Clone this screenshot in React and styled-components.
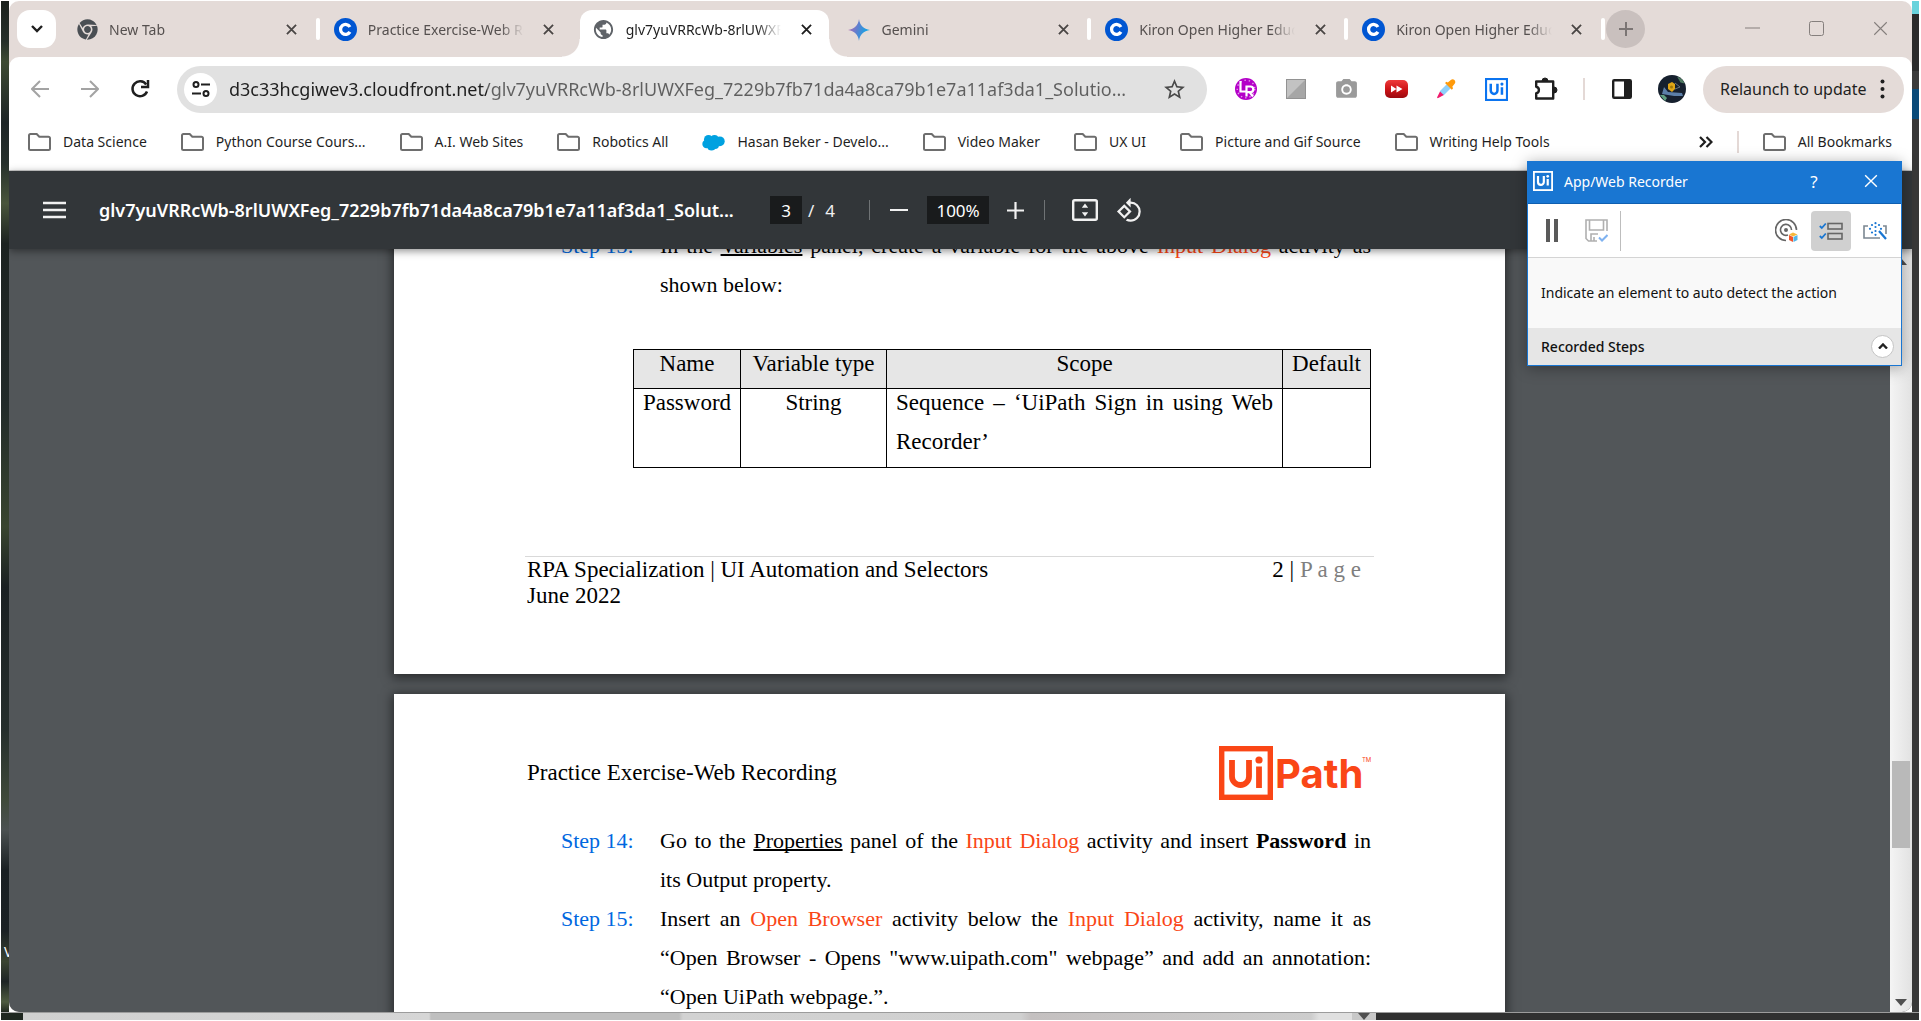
import React from "react";
import styled, { createGlobalStyle, css } from "styled-components";
import { FaChrome } from "react-icons/fa";
import { MdPublic, MdPhotoCamera, MdStarBorder, MdRotate90DegreesCcw } from "react-icons/md";

const ui = `"Noto Sans", "Open Sans", sans-serif`;
const serif = `"Liberation Serif", "Times New Roman", serif`;

const Global = createGlobalStyle`
  *, *::before, *::after { box-sizing: border-box; }
  html, body { margin: 0; height: 100%; background: #fff; }
  body { overflow: hidden; font-family: ${ui}; font-size: 14px; color: #1f1f1f; }
  button, input { font: inherit; color: inherit; border: 0; padding: 0; margin: 0; background: none; }
  svg { display: block; flex: none; }
  p, h1, h2 { margin: 0; font-weight: 400; font-size: inherit; }
`;

/* ---------- desktop ---------- */
const Desktop = styled.div`
  display: grid;
  grid-template-columns: 8px minmax(0, 1fr) 7px;
  grid-template-rows: minmax(0, 1fr) 8px;
  height: 100vh;
  padding: 1px 2px 1px 1px;
`;
const LeftEdge = styled.div`
  display: flex;
  align-items: flex-end;
  overflow: hidden;
  padding: 0 0 50px 3px;
  color: #fff;
  font-size: 14px;
  line-height: 20px;
  background: linear-gradient(180deg, #1b211d 0, #26302a 4%, #3d4a33 6%, #1d2526 12%, #26302c 16%, #49553c 20%, #1c2220 24%,
    #222b2a 40%, #39452f 52%, #1a2022 58%, #252e2c 72%, #3f4a3a 79%, #4b5151 82%, #191f22 86%, #1b2124 92%, #3a4431 95%, #1d2425 97%, #4e5b40 99%, #20281f 100%);
`;
const RightEdge = styled.div`
  background: linear-gradient(180deg, #69d3dc 0 13px, #2b2b2b 13px 70px, #3a3a3a 70px 88px, #0a4a78 88px 118px, #383838 118px);
`;
const BottomEdge = styled.div`
  grid-column: 1 / -1;
  display: flex;
  justify-content: flex-end;
  padding-left: 22px;
  background: linear-gradient(90deg, #1f2720 22px, #d0d0d0 22px, #d6d6d6 428px, #bfbfbf 430px, #bfbfbf 678px, #d2d2d2 682px, #d0d0d0 1020px, #c4c0c0 1030px, #cdcdcd 1310px, #e0e0e0 1318px);
  border-top: 1px solid #9c9c9c;
`;
const BottomArrow = styled.div`
  display: flex;
  justify-content: center;
  width: 24px;
  background: #c8c8c8;
`;
const BottomDark = styled.div`
  width: 543px;
  background: #303030;
`;

/* ---------- browser window ---------- */
const Window = styled.main`
  display: flex;
  flex-direction: column;
  min-width: 0;
  background: #e4dbd8;
  border-radius: 10px;
  overflow: hidden;
`;
const TabStrip = styled.header`
  display: flex;
  align-items: flex-start;
  height: 56px;
  padding: 9px 0 0 8px;
`;
const TabSearch = styled.button`
  display: grid;
  place-items: center;
  flex: none;
  width: 39px;
  height: 38px;
  margin-right: 5px;
  border-radius: 13px;
  background: #fff;
`;
const TabList = styled.nav`
  display: flex;
  flex: 0 1 1542px;
  min-width: 0;
`;
const Tab = styled.div`
  position: relative;
  display: flex;
  align-items: center;
  flex: 1 1 0;
  min-width: 0;
  height: 39px;
  padding: 0 16px;
  gap: 11px;
  color: #55504f;
  ${(p) =>
    p.$bar &&
    css`
      &::after {
        content: "";
        position: absolute;
        right: -2px;
        top: 8px;
        width: 4px;
        height: 22px;
        border-radius: 2px;
        background: #fff;
      }
    `}
  ${(p) =>
    p.$active &&
    css`
      height: 47px;
      margin: 0 3px 0 5px;
      padding: 0 13px 8px 12px;
      border-radius: 12px 12px 0 0;
      background: #fff;
      color: #1f1f1f;
      &::before,
      &::after {
        content: "";
        position: absolute;
        bottom: 0;
        width: 18px;
        height: 18px;
      }
      &::before {
        left: -18px;
        background: radial-gradient(circle at 0 0, transparent 17px, #fff 18px);
      }
      &::after {
        right: -18px;
        background: radial-gradient(circle at 100% 0, transparent 17px, #fff 18px);
      }
    `}
`;
const TabTitle = styled.span`
  flex: 1;
  min-width: 0;
  overflow: hidden;
  white-space: nowrap;
  line-height: 22px;
  mask-image: linear-gradient(90deg, #000 calc(100% - 28px), transparent calc(100% - 4px));
`;
const TabClose = styled.button`
  display: grid;
  place-items: center;
  width: 20px;
  height: 20px;
  color: ${(p) => (p.$active ? "#1f1f1f" : "#4a4645")};
`;
const NewTab = styled.button`
  display: grid;
  place-items: center;
  flex: none;
  width: 39px;
  height: 38px;
  margin-left: 3px;
  border-radius: 50%;
  background: #c9c0be;
  color: #7b7574;
`;
const WindowControls = styled.div`
  display: flex;
  margin-left: auto;
  color: #857f7d;
`;
const WindowButton = styled.button`
  display: grid;
  place-items: center;
  width: 64px;
  height: 36px;
`;
const Chrome = styled.section`
  background: #fff;
  border-radius: 10px 10px 0 0;
  border-bottom: 1px solid #cfcfcf;
`;
const AddressRow = styled.div`
  display: flex;
  align-items: center;
  height: 64px;
  padding: 0 8px 0 6px;
`;
const ToolButton = styled.button`
  display: grid;
  place-items: center;
  flex: none;
  width: 50px;
  height: 40px;
  color: ${(p) => (p.$muted ? "#a3a3a3" : "#1f1f1f")};
`;
const Omnibox = styled.label`
  display: flex;
  align-items: center;
  flex: 1;
  min-width: 0;
  height: 47px;
  margin: 0 14px 0 12px;
  padding: 0 20px 0 7px;
  border-radius: 24px;
  background: #e1e1e1;
`;
const SiteInfo = styled.span`
  display: grid;
  place-items: center;
  width: 33px;
  height: 33px;
  margin-right: 12px;
  border-radius: 50%;
  background: #fff;
`;
const UrlInput = styled.input`
  flex: 1;
  min-width: 0;
  height: 32px;
  font-size: 18px;
  text-overflow: ellipsis;
  color: transparent;
  background: linear-gradient(90deg, #1f1f1f 258px, #5f5f5f 258px);
  background-clip: text;
  outline: 0;
`;
const ThinBar = styled.span`
  flex: none;
  width: 2px;
  height: 22px;
  margin: 0 ${(p) => p.$m || 0}px;
  background: #e4d9d6;
`;
const Relaunch = styled.button`
  display: flex;
  align-items: center;
  justify-content: space-between;
  flex: none;
  width: 201px;
  height: 47px;
  margin-left: 6px;
  padding: 0 19px 0 17px;
  border-radius: 24px;
  background: #e4dbd8;
  font-size: 16px;
  white-space: nowrap;
`;
const BookmarkRow = styled.nav`
  display: flex;
  align-items: center;
  height: 49px;
  padding: 0 20px 7px 19px;
  gap: 34px;
`;
const Bookmark = styled.a`
  display: flex;
  align-items: center;
  gap: 12px;
  color: #1f1f1f;
  text-decoration: none;
  white-space: nowrap;
  line-height: 22px;
`;
const BookmarkEnd = styled.div`
  display: flex;
  align-items: center;
  gap: 24px;
  margin-left: auto;
`;

/* ---------- pdf viewer ---------- */
const PdfBar = styled.div`
  position: relative;
  z-index: 2;
  display: flex;
  align-items: center;
  flex: none;
  height: 78px;
  padding: 0 23px;
  background: #323639;
  color: #f1f1f1;
  box-shadow: 0 2px 8px rgba(0, 0, 0, 0.45);
`;
const PdfButton = styled.button`
  display: grid;
  place-items: center;
  flex: none;
  width: 45px;
  height: 40px;
`;
const PdfTitle = styled.h1`
  flex: none;
  width: 671px;
  margin-left: 22px;
  overflow: hidden;
  white-space: nowrap;
  font-size: 18px;
  font-weight: 600;
  line-height: 26px;
  color: #fff;
`;
const PdfInput = styled.input`
  flex: none;
  width: ${(p) => p.$w}px;
  height: 28px;
  margin: ${(p) => p.$m || 0};
  background: #191b1c;
  font-size: 17px;
  text-align: center;
  color: #fff;
`;
const PageCount = styled.span`
  display: flex;
  gap: 11px;
  margin-left: 6px;
  font-size: 17px;
`;
const PdfDivider = styled.span`
  flex: none;
  width: 1px;
  height: 20px;
  margin: ${(p) => p.$m};
  background: #6f7375;
`;
const Viewer = styled.section`
  display: flex;
  flex: 1;
  min-height: 0;
  background: #525659;
`;
const PageStack = styled.div`
  display: flex;
  flex-direction: column;
  align-items: center;
  flex: 1;
  min-width: 0;
  gap: 20px;
  margin-top: -23px;
`;
const Page = styled.article`
  flex: none;
  width: 100%;
  max-width: 1111px;
  padding: ${(p) => p.$pad};
  background: #fff;
  box-shadow: 0 2px 10px 2px rgba(0, 0, 0, 0.5);
  color: #000;
  font-family: ${serif};
  font-size: 23px;
`;
const Step = styled.div`
  display: grid;
  grid-template-columns: 99px minmax(0, 1fr);
  padding-left: 34px;
  font-size: 22px;
  line-height: 39px;
`;
const StepLabel = styled.h2`
  color: #0067df;
`;
const StepText = styled.p`
  text-align: justify;
`;
const Term = styled.span`
  color: #fa4616;
`;
const Underlined = styled.u`
  text-decoration-thickness: 2px;
  text-decoration-skip-ink: none;
`;
const VarTable = styled.table`
  width: calc(100% - 106px);
  margin: 45px 0 88px 106px;
  border-collapse: collapse;
  table-layout: fixed;
  line-height: 39px;
  th,
  td {
    padding: 0 9px;
    border: 1px solid #000;
    font-weight: 400;
    text-align: center;
    vertical-align: top;
    white-space: nowrap;
  }
  th {
    background: #e6e6e6;
  }
  th p {
    margin: -6px -9px 5px;
  }
  td p {
    margin: -6px 0 6px;
  }
  td:nth-child(1) p {
    margin: -6px -9px 6px;
  }
  td:nth-child(3) {
    text-align: justify;
    white-space: normal;
  }
`;
const PageFooter = styled.footer`
  display: flex;
  justify-content: space-between;
  margin: 0 -3px 0 -2px;
  padding: 0 13px 0 2px;
  border-top: 1px solid #d9d9d9;
  line-height: 26px;
`;
const PageNumber = styled.p`
  span {
    color: #7f7f7f;
  }
`;
const PageHeader = styled.header`
  display: flex;
  align-items: center;
  justify-content: space-between;
  margin-bottom: 21px;
`;
const Scrollbar = styled.div`
  display: flex;
  flex-direction: column;
  align-items: center;
  justify-content: space-between;
  flex: none;
  width: 22px;
  padding: 9px 0 6px;
  background: linear-gradient(90deg, #f4f4f4, #e2e2e2);
`;
const Thumb = styled.div`
  width: 18px;
  height: 87px;
  margin-top: 344px;
  background: #b9b9b9;
`;

/* ---------- recorder ---------- */
const Recorder = styled.aside`
  position: absolute;
  top: 161px;
  right: 19px;
  z-index: 5;
  width: 375px;
  border: 1px solid #1976d2;
  background: #fff;
  box-shadow: 0 2px 14px rgba(0, 0, 0, 0.35);
  color: #111;
`;
const RecTitle = styled.header`
  display: flex;
  align-items: center;
  height: 42px;
  padding: 0 20px 3px 5px;
  background: #1976d2;
  border-bottom: 1px solid #0f5fb0;
  color: #fff;
  h2 {
    flex: 1;
    margin-left: 11px;
  }
`;
const RecTitleButton = styled.button`
  display: grid;
  place-items: center;
  width: 20px;
  height: 24px;
  margin-left: ${(p) => p.$gap || 0}px;
  font-size: 17px;
`;
const RecTools = styled.div`
  display: flex;
  align-items: center;
  height: 54px;
  padding: 0 2px 0 4px;
  border-bottom: 1px solid #d4d4d4;
`;
const RecTool = styled.button`
  display: grid;
  place-items: center;
  width: 40px;
  height: 40px;
  margin-right: 4px;
  border-radius: 4px;
  background: ${(p) => (p.$on ? "#d0d0d0" : "transparent")};
`;
const RecDivider = styled.span`
  width: 1px;
  height: 40px;
  margin-right: auto;
  background: #bdbdbd;
`;
const RecHint = styled.p`
  padding: 24px 13px;
  background: #f9f9f9;
  line-height: 22px;
`;
const RecFooter = styled.footer`
  display: flex;
  align-items: center;
  justify-content: space-between;
  height: 37px;
  padding: 0 7px 1px 13px;
  background: #e6e6e6;
  font-weight: 500;
`;
const Round = styled.button`
  display: grid;
  place-items: center;
  width: 23px;
  height: 23px;
  border: 1px solid #c4c4c4;
  border-radius: 50%;
  background: #fff;
`;

/* ---------- drawings ---------- */
const Cross = ({ s = 11, w = 2 }) => (
  <svg width={s} height={s} viewBox="0 0 12 12" stroke="currentColor" strokeWidth={w} fill="none">
    <path d="M1 1l10 10M11 1L1 11" />
  </svg>
);
const Coursera = () => (
  <svg width="23" height="23" viewBox="0 0 24 24">
    <circle cx="12" cy="12" r="12" fill="#0056d2" />
    <path d="M16.6 14.5A5.2 5.2 0 1 1 16.6 9.4" fill="none" stroke="#fff" strokeWidth="3.4" />
  </svg>
);
const Gemini = () => (
  <svg width="22" height="22" viewBox="0 0 24 24">
    <defs>
      <linearGradient id="gem" x1="0" y1="0" x2="1" y2="0.3">
        <stop offset="0.1" stopColor="#b56ab0" />
        <stop offset="0.5" stopColor="#5f7fcf" />
        <stop offset="0.9" stopColor="#1ba1e3" />
      </linearGradient>
    </defs>
    <path d="M12 0c.8 6.6 5 11.2 12 12-7 .8-11.2 5.4-12 12-.8-6.6-5-11.2-12-12C7 11.2 11.2 6.6 12 0z" fill="url(#gem)" />
  </svg>
);
const Folder = () => (
  <svg width="23" height="18" viewBox="0 0 23 18" fill="none" stroke="#6e6e6e" strokeWidth="2">
    <path d="M2.5 1h6.2l2.6 2.8h9.2A1.5 1.5 0 0 1 22 5.3v10.2a1.5 1.5 0 0 1-1.5 1.5h-18A1.5 1.5 0 0 1 1 15.5v-13A1.5 1.5 0 0 1 2.5 1z" />
  </svg>
);
const Cloud = () => (
  <svg width="23" height="17" viewBox="0 0 23 17" fill="#00a1e0">
    <circle cx="6.5" cy="5.5" r="4.5" />
    <circle cx="12.5" cy="5" r="4" />
    <circle cx="17.8" cy="7.3" r="4.9" />
    <circle cx="4.5" cy="10" r="4.2" />
    <circle cx="9.5" cy="12" r="4.6" />
    <circle cx="13" cy="11" r="4" />
  </svg>
);
const Arrow = ({ flip }) => (
  <svg width="18" height="18" viewBox="0 0 18 18" fill="none" stroke="currentColor" strokeWidth="2">
    <path d={flip ? "M0 9h16M9 1l8 8-8 8" : "M18 9H2M9 1L1 9l8 8"} />
  </svg>
);
const Reload = () => (
  <svg width="20" height="20" viewBox="0 0 20 20" fill="none" stroke="currentColor" strokeWidth="2.5">
    <path d="M17 12.5A7.5 7.5 0 1 1 16.2 5.5" />
    <path d="M18 1v7h-7" />
  </svg>
);
const Tune = () => (
  <svg width="18" height="18" viewBox="0 0 18 18" fill="none" stroke="#1f1f1f" strokeWidth="2">
    <circle cx="4" cy="4.5" r="2.5" />
    <path d="M9 4.5h9M0 13.5h9" />
    <circle cx="14" cy="13.5" r="2.5" />
  </svg>
);
const LrIcon = () => (
  <svg width="22" height="22" viewBox="0 0 22 22">
    <circle cx="11" cy="11" r="11" fill="#b400c8" />
    <circle cx="11" cy="11" r="8.8" fill="none" stroke="#e29bea" strokeWidth="1.4" strokeDasharray="1.4 3" />
    <path d="M5.5 3v10.5h6M11.5 18.5V8.5h4a2.8 2.8 0 0 1 0 5.6h-4M14.5 14l3.5 4.5" fill="none" stroke="#fff" strokeWidth="2.2" />
  </svg>
);
const Shade = () => (
  <svg width="20" height="20" viewBox="0 0 20 20">
    <rect width="20" height="20" fill="#929292" />
    <path d="M1 1h18v18H1z" fill="#a6a6a6" />
    <path d="M1 19V1h18z" fill="#c2c2c2" />
  </svg>
);
const Forward = () => (
  <svg width="23" height="18" viewBox="0 0 23 18">
    <defs>
      <linearGradient id="fwd" x1="0" y1="0" x2="0" y2="1">
        <stop offset="0" stopColor="#ee3b3b" />
        <stop offset="0.5" stopColor="#cf1518" />
        <stop offset="1" stopColor="#9c0a10" />
      </linearGradient>
    </defs>
    <rect width="23" height="18" rx="5" fill="url(#fwd)" />
    <path d="M6 5.5l5.5 3.5L6 12.5zM11.5 5.5L17.5 9l-6 3.5z" fill="#fff" />
  </svg>
);
const Picker = () => (
  <svg width="20" height="20" viewBox="0 0 20 20">
    <path d="M4 12l7-7 4 4-7 7-4 1z" fill="#8fd0fb" />
    <path d="M4 12.5L1 18.5l.8.8 6-3.3z" fill="#f01a6c" />
    <path d="M9 4l1.5-1.2 1.3.8L14.8 1c2.5-2 5.8 1 4 3.5l-2.5 3.2.8 1.5-1.3 1.5z" fill="#ff9a0a" />
  </svg>
);
const UiSquare = ({ s, color }) => (
  <svg width={s} height={s} viewBox="0 0 22 22">
    <rect x="1" y="1" width="20" height="20" fill="none" stroke={color} strokeWidth="2" />
    <path d="M5.5 5.5v6.5a3.2 3.2 0 0 0 6.4 0V5.5M16.2 8.8v7.2" fill="none" stroke={color} strokeWidth="2.4" />
    <circle cx="16.2" cy="5.8" r="1.5" fill={color} />
  </svg>
);
const Puzzle = () => (
  <svg width="24" height="24" viewBox="0 0 24 24" fill="none" stroke="#1f1f1f" strokeWidth="2.4" strokeLinejoin="round">
    <path d="M2.2 4.5h17v17h-17v-5.2c3.6-.6 3.6-6 0-6.6z" />
    <path d="M8 4a3 3 0 0 1 6 0zM20 10a3 3 0 0 1 0 6z" fill="#1f1f1f" strokeWidth="1" />
  </svg>
);
const SidePanel = () => (
  <svg width="20" height="20" viewBox="0 0 20 20">
    <rect x="1.2" y="1.2" width="17.6" height="17.6" rx="1" fill="none" stroke="#1f1f1f" strokeWidth="2.4" />
    <rect x="12" y="1" width="7" height="18" fill="#1f1f1f" />
  </svg>
);
const Avatar = () => (
  <svg width="28" height="28" viewBox="0 0 28 28">
    <circle cx="14" cy="14" r="14" fill="#16202e" />
    <path d="M19 1.500q6 2 7.500 7l-4-1z" fill="#4f7a62" />
    <path d="M2 20l4 0 3 3-2 3z" fill="#5fa080" />
    <path d="M6 12l4 5 14 1 1 3-9 0-12-2z" fill="#5c7fa8" />
    <path d="M17 8l5 4-5 2" fill="none" stroke="#6b7480" strokeWidth="1" />
    <path d="M10 9l4-2 3 2v5l-3 3-4-3z" fill="#e0a516" />
    <circle cx="13.5" cy="12" r="1.5" fill="#a07808" />
  </svg>
);
const Dots = () => (
  <svg width="5" height="20" viewBox="0 0 5 20" fill="#1f1f1f">
    <circle cx="2.5" cy="2.5" r="2" />
    <circle cx="2.5" cy="10" r="2" />
    <circle cx="2.5" cy="17.5" r="2" />
  </svg>
);
const FitPage = () => (
  <svg width="26" height="22" viewBox="0 0 26 22">
    <rect x="1.2" y="1.2" width="23.6" height="19.6" rx="1.5" fill="none" stroke="#f1f1f1" strokeWidth="2.4" />
    <path d="M13 4.5l3.2 4.2H9.8zM13 17.5l3.2-4.2H9.8z" fill="#f1f1f1" />
  </svg>
);
const Triangle = ({ up }) => (
  <svg width="12" height="7" viewBox="0 0 12 7" fill="#505050">
    <path d={up ? "M6 0l6 7H0z" : "M0 0h12L6 7z"} />
  </svg>
);
const UiPathLogo = () => (
  <svg width="153" height="54" viewBox="0 0 153 54" role="img" aria-label="UiPath">
    <rect x="3.7" y="2.7" width="48.6" height="48.6" fill="none" stroke="#fa4616" strokeWidth="5.4" />
    <path d="M14 14v16.5a8.500 8.500 0 0 0 17 0V14M41 20.500V42" fill="none" stroke="#fa4616" strokeWidth="5.800" />
    <circle cx="41" cy="14" r="3.600" fill="#fa4616" />
    <text x="57" y="42" fontFamily="Inter, sans-serif" fontWeight="700" fontSize="40" fill="#fa4616">Path</text>
    <text x="144" y="16" fontFamily="Inter, sans-serif" fontSize="6" fill="#fa4616">TM</text>
  </svg>
);
const Floppy = () => (
  <svg width="23" height="23" viewBox="0 0 23 23" fill="none" stroke="#b0b0b0" strokeWidth="1.6">
    <path d="M12 22H3.500L1 19.500V1h21v11M4.500 1v10h14V1M6 22v-7h7M9 22v-4" />
    <path d="M14 18.500l3 3 5.500-5.500" stroke="#7fb2f0" strokeWidth="2" />
  </svg>
);
const Target = () => (
  <svg width="24" height="24" viewBox="0 0 24 24" fill="none" stroke="#666" strokeWidth="1.6">
    <circle cx="11" cy="11" r="1.2" fill="#666" />
    <path d="M13 16A5.500 5.500 0 1 1 16.500 11M11 21.500A10.500 10.500 0 1 1 21.500 11" />
    <path d="M14 15.500l4-2 4.500 2-4.500 2z" fill="#f6b83c" stroke="none" />
    <path d="M14 16l4 2v5l-4-2z" fill="#f2552c" stroke="none" />
    <path d="M22.500 16l-4 2v5l4-2z" fill="#52b6ea" stroke="none" />
  </svg>
);
const Checklist = () => (
  <svg width="24" height="18" viewBox="0 0 24 18" fill="none">
    <rect x="9" y="1.5" width="14" height="5.5" stroke="#666" strokeWidth="1.6" />
    <rect x="9" y="11.5" width="14" height="5.5" stroke="#666" strokeWidth="1.6" />
    <path d="M.8 4l2 2 4-4.500M.8 14l2 2 4-4.500" stroke="#1976d2" strokeWidth="1.8" />
  </svg>
);
const Wand = () => (
  <svg width="24" height="18" viewBox="0 0 24 18" fill="none">
    <path d="M5 4H1v12h16M20 4h3v8" stroke="#7b8791" strokeWidth="1.6" />
    <path d="M16 9l7 8" stroke="#1976d2" strokeWidth="2.2" />
    <g fill="#1976d2">
      <circle cx="12.5" cy="1.2" r="1.1" /><circle cx="12.5" cy="5" r="1.1" />
      <circle cx="12.5" cy="9" r="1.1" /><circle cx="12.5" cy="12.8" r="1.1" />
      <circle cx="7" cy="6.8" r="1.1" /><circle cx="18" cy="6.8" r="1.1" />
      <circle cx="9" cy="3" r="1.1" /><circle cx="16" cy="3" r="1.1" />
      <circle cx="9" cy="10.5" r="1.1" />
    </g>
  </svg>
);

const tabs = [
  { title: "New Tab", icon: <FaChrome size={21} color="#4a4f54" />, bar: true },
  { title: "Practice Exercise-Web Recording", icon: <Coursera /> },
  { title: "glv7yuVRRcWb-8rlUWXFeg_7229b7", icon: <MdPublic size={23} color="#5f6368" />, active: true },
  { title: "Gemini", icon: <Gemini />, bar: true },
  { title: "Kiron Open Higher Education", icon: <Coursera />, bar: true },
  { title: "Kiron Open Higher Education", icon: <Coursera />, bar: true },
];
const bookmarks = [
  "Data Science",
  "Python Course Cours...",
  "A.I. Web Sites",
  "Robotics All",
  "Hasan Beker - Develo...",
  "Video Maker",
  "UX UI",
  "Picture and Gif Source",
  "Writing Help Tools",
];
const extensions = [
  ["LR", <LrIcon />],
  ["Shade", <Shade />],
  ["Screenshot", <MdPhotoCamera size={25} color="#9a9a9a" />],
  ["Video speed", <Forward />],
  ["Color picker", <Picker />],
  ["UiPath", <UiSquare s={23} color="#0b74f0" />],
  ["Extensions", <Puzzle />],
];

export default function App() {
  return (
    <>
      <Global />
      <Desktop>
        <LeftEdge>V</LeftEdge>
        <Window>
          <TabStrip>
            <TabSearch aria-label="Search tabs">
              <svg width="12" height="8" viewBox="0 0 12 8" fill="none" stroke="#1f1f1f" strokeWidth="2.4">
                <path d="M1 1l5 5 5-5" />
              </svg>
            </TabSearch>
            <TabList>
              {tabs.map((t, i) => (
                <Tab key={i} $active={t.active} $bar={t.bar}>
                  {t.icon}
                  <TabTitle>{t.title}</TabTitle>
                  <TabClose $active={t.active} aria-label="Close tab">
                    <Cross />
                  </TabClose>
                </Tab>
              ))}
            </TabList>
            <NewTab aria-label="New tab">
              <svg width="14" height="14" viewBox="0 0 14 14" stroke="currentColor" strokeWidth="2">
                <path d="M7 0v14M0 7h14" />
              </svg>
            </NewTab>
            <WindowControls>
              <WindowButton aria-label="Minimize">
                <svg width="15" height="2" viewBox="0 0 15 2"><path d="M0 1h15" stroke="currentColor" /></svg>
              </WindowButton>
              <WindowButton aria-label="Maximize">
                <svg width="15" height="15" viewBox="0 0 15 15"><rect x=".5" y=".5" width="14" height="14" rx="2" fill="none" stroke="currentColor" /></svg>
              </WindowButton>
              <WindowButton aria-label="Close">
                <Cross s={15} w={0.9} />
              </WindowButton>
            </WindowControls>
          </TabStrip>

          <Chrome>
            <AddressRow>
              <ToolButton $muted aria-label="Back"><Arrow /></ToolButton>
              <ToolButton $muted aria-label="Forward"><Arrow flip /></ToolButton>
              <ToolButton aria-label="Reload"><Reload /></ToolButton>
              <Omnibox>
                <SiteInfo><Tune /></SiteInfo>
                <UrlInput
                  aria-label="Address"
                  defaultValue="d3c33hcgiwev3.cloudfront.net/glv7yuVRRcWb-8rlUWXFeg_7229b7fb71da4a8ca79b1e7a11af3da1_Solutio..."
                />
                <MdStarBorder size={25} color="#4a4a4a" />
              </Omnibox>
              {extensions.map(([name, icon]) => (
                <ToolButton key={name} aria-label={name}>{icon}</ToolButton>
              ))}
              <ThinBar $m={12} />
              <ToolButton aria-label="Side panel"><SidePanel /></ToolButton>
              <ToolButton aria-label="Profile"><Avatar /></ToolButton>
              <Relaunch>
                Relaunch to update
                <Dots />
              </Relaunch>
            </AddressRow>
            <BookmarkRow>
              {bookmarks.map((b) => (
                <Bookmark key={b} href="#">
                  {b.startsWith("Hasan") ? <Cloud /> : <Folder />}
                  {b}
                </Bookmark>
              ))}
              <BookmarkEnd>
                <svg width="14" height="12" viewBox="0 0 14 12" fill="none" stroke="#1f1f1f" strokeWidth="2.2">
                  <path d="M1 1l5 5-5 5M7.500 1l5 5-5 5" />
                </svg>
                <ThinBar />
                <Bookmark href="#">
                  <Folder />
                  All Bookmarks
                </Bookmark>
              </BookmarkEnd>
            </BookmarkRow>
          </Chrome>

          <PdfBar>
            <PdfButton aria-label="Menu">
              <svg width="23" height="18" viewBox="0 0 23 18" stroke="#f1f1f1" strokeWidth="2.5">
                <path d="M0 2h23M0 9h23M0 16h23" />
              </svg>
            </PdfButton>
            <PdfTitle>glv7yuVRRcWb-8rlUWXFeg_7229b7fb71da4a8ca79b1e7a11af3da1_Solut...</PdfTitle>
            <PdfInput $w={32} aria-label="Page number" defaultValue="3" />
            <PageCount><span>/</span><span>4</span></PageCount>
            <PdfDivider $m="0 6px 0 34px" />
            <PdfButton aria-label="Zoom out">
              <svg width="18" height="2" viewBox="0 0 18 2"><path d="M0 1h18" stroke="#f1f1f1" strokeWidth="2" /></svg>
            </PdfButton>
            <PdfInput $w={62} $m="0 4px 0 6px" aria-label="Zoom level" defaultValue="100%" />
            <PdfButton aria-label="Zoom in">
              <svg width="17" height="17" viewBox="0 0 17 17" stroke="#f1f1f1" strokeWidth="2.2">
                <path d="M8.500 0v17M0 8.500h17" />
              </svg>
            </PdfButton>
            <PdfDivider $m="0 17px 0 6px" />
            <PdfButton aria-label="Fit to page"><FitPage /></PdfButton>
            <PdfButton aria-label="Rotate"><MdRotate90DegreesCcw size={27} /></PdfButton>
          </PdfBar>

          <Viewer>
            <PageStack>
              <Page $pad="0 134px 65px 133px">
                <Step>
                  <StepLabel>Step 13:</StepLabel>
                  <StepText>
                    In the <Underlined>Variables</Underlined> panel, create a variable for the above{" "}
                    <Term>Input Dialog</Term> activity as shown below:
                  </StepText>
                </Step>
                <VarTable>
                  <colgroup>
                    <col width="107" />
                    <col width="146" />
                    <col />
                    <col width="88" />
                  </colgroup>
                  <thead>
                    <tr>
                      <th><p>Name</p></th>
                      <th><p>Variable type</p></th>
                      <th><p>Scope</p></th>
                      <th><p>Default</p></th>
                    </tr>
                  </thead>
                  <tbody>
                    <tr>
                      <td><p>Password</p></td>
                      <td><p>String</p></td>
                      <td><p>Sequence – ‘UiPath Sign in using Web Recorder’</p></td>
                      <td />
                    </tr>
                  </tbody>
                </VarTable>
                <PageFooter>
                  <p>
                    RPA Specialization | UI Automation and Selectors
                    <br />
                    June 2022
                  </p>
                  <PageNumber>2 | <span>P a g e</span></PageNumber>
                </PageFooter>
              </Page>

              <Page $pad="52px 134px 65px 133px">
                <PageHeader>
                  <p>Practice Exercise-Web Recording</p>
                  <UiPathLogo />
                </PageHeader>
                <Step>
                  <StepLabel>Step 14:</StepLabel>
                  <StepText>
                    Go to the <Underlined>Properties</Underlined> panel of the <Term>Input Dialog</Term> activity and insert{" "}
                    <b>Password</b> in its Output property.
                  </StepText>
                </Step>
                <Step>
                  <StepLabel>Step 15:</StepLabel>
                  <StepText>
                    Insert an <Term>Open Browser</Term> activity below the <Term>Input Dialog</Term> activity, name it as “Open
                    Browser - Opens "www.uipath.com" webpage” and add an annotation: “Open UiPath webpage.”.
                  </StepText>
                </Step>
              </Page>
            </PageStack>
            <Scrollbar>
              <Triangle up />
              <Thumb />
              <Triangle />
            </Scrollbar>
          </Viewer>
        </Window>
        <RightEdge />
        <BottomEdge>
          <BottomArrow><Triangle /></BottomArrow>
          <BottomDark />
        </BottomEdge>
      </Desktop>

      <Recorder>
        <RecTitle>
          <UiSquare s={20} color="#fff" />
          <h2>App/Web Recorder</h2>
          <RecTitleButton aria-label="Help">?</RecTitleButton>
          <RecTitleButton $gap={37} aria-label="Close"><Cross s={14} w={1.2} /></RecTitleButton>
        </RecTitle>
        <RecTools>
          <RecTool aria-label="Pause">
            <svg width="12" height="23" viewBox="0 0 12 23" fill="#5a5a5a"><path d="M0 0h4v23H0zM8 0h4v23H8z" /></svg>
          </RecTool>
          <RecTool aria-label="Save"><Floppy /></RecTool>
          <RecDivider />
          <RecTool aria-label="Target"><Target /></RecTool>
          <RecTool $on aria-label="Recorded steps"><Checklist /></RecTool>
          <RecTool aria-label="Auto detect"><Wand /></RecTool>
        </RecTools>
        <RecHint>Indicate an element to auto detect the action</RecHint>
        <RecFooter>
          Recorded Steps
          <Round aria-label="Collapse">
            <svg width="10" height="6" viewBox="0 0 10 6" fill="none" stroke="#222" strokeWidth="2.4"><path d="M1 5.500l4-4 4 4" /></svg>
          </Round>
        </RecFooter>
      </Recorder>
    </>
  );
}
